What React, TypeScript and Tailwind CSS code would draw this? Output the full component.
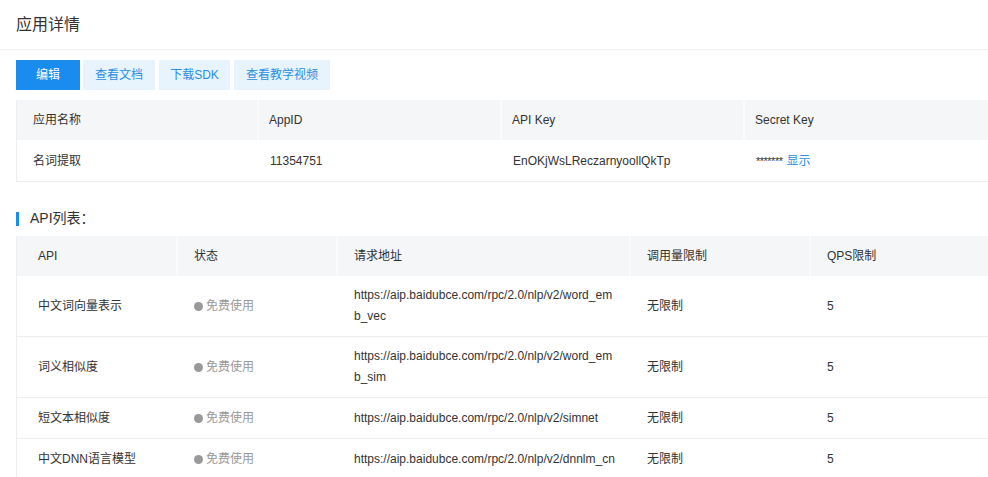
const apps = [{ name: '名词提取', appId: '11354751', apiKey: 'EnOKjWsLReczarnyoollQkTp' }];

const apis = [
  { name: '中文词向量表示', url: ['https://aip.baidubce.com/rpc/2.0/nlp/v2/word_em', 'b_vec'] },
  { name: '词义相似度', url: ['https://aip.baidubce.com/rpc/2.0/nlp/v2/word_em', 'b_sim'] },
  { name: '短文本相似度', url: ['https://aip.baidubce.com/rpc/2.0/nlp/v2/simnet'] },
  { name: '中文DNN语言模型', url: ['https://aip.baidubce.com/rpc/2.0/nlp/v2/dnnlm_cn'] },
];

const font = { fontFamily: '"Liberation Sans", Arial, "Noto Sans CJK SC", sans-serif' };

export default function App() {
  return (
    <div className="h-[477px] w-[988px] overflow-hidden bg-white text-[#333]" style={font}>
      <div className="flex h-[50px] items-center border-b border-[#eef0f3] px-4">
        <h1 className="text-[16px] font-normal text-[#333]">应用详情</h1>
      </div>

      <div className="pl-4">
        <div className="mt-[10px] flex gap-[3px]">
          <button className="h-[30px] w-[64px] bg-[#1a8cef] text-[12px] text-white">编辑</button>
          <button className="h-[30px] w-[72px] bg-[#e8f4fd] text-[12px] text-[#2a8ee6]">查看文档</button>
          <button className="ml-[1px] h-[30px] w-[71px] bg-[#e8f4fd] text-[12px] text-[#2a8ee6]">下载SDK</button>
          <button className="ml-[1px] h-[30px] w-[96px] bg-[#e8f4fd] text-[12px] text-[#2a8ee6]">查看教学视频</button>
        </div>

        <div className="mt-[10px] w-[990px] border-b border-l border-[#eceef1] text-[12px]">
          <div className="grid h-10 grid-cols-[242px_243px_243px_1fr] items-stretch bg-[#f5f6f8]">
            <div className="flex items-center border-r-2 border-[#fafbfc] pl-4">应用名称</div>
            <div className="flex items-center border-r-2 border-[#fafbfc] pl-[10px]">AppID</div>
            <div className="flex items-center border-r-2 border-[#fafbfc] pl-[10px]">API Key</div>
            <div className="flex items-center pl-[10px]">Secret Key</div>
          </div>
          {apps.map((a) => (
            <div key={a.appId} className="grid h-[41px] grid-cols-[242px_243px_243px_1fr] items-center">
              <div className="pl-4">{a.name}</div>
              <div className="pl-[11px]">{a.appId}</div>
              <div className="pl-[11px]">{a.apiKey}</div>
              <div className="pl-[11px]">
                <span className="text-[11px] tracking-[-0.5px]">*******</span>
                <a className="ml-[4px] text-[#2a8ee6]">显示</a>
              </div>
            </div>
          ))}
        </div>

        <div className="mt-[29px] flex h-[15px] items-center">
          <span className="h-[14px] w-[3px] bg-[#1a8cef]" />
          <span className="ml-[11px] text-[14px]">API列表：</span>
        </div>

        <div className="mt-[10px] w-[990px] border-l border-[#eceef1] text-[12px]">
          <div className="grid h-10 grid-cols-[161px_160px_293px_180px_1fr] items-stretch bg-[#f5f6f8]">
            <div className="flex items-center border-r-2 border-[#fafbfc] pl-[21px]">API</div>
            <div className="flex items-center border-r-2 border-[#fafbfc] pl-4">状态</div>
            <div className="flex items-center border-r-2 border-[#fafbfc] pl-4">请求地址</div>
            <div className="flex items-center border-r-2 border-[#fafbfc] pl-4">调用量限制</div>
            <div className="flex items-center pl-4">QPS限制</div>
          </div>
          {apis.map((r) => (
            <div
              key={r.name}
              className={`grid grid-cols-[161px_160px_293px_180px_1fr] items-center border-b border-[#eceef1] ${
                r.url.length > 1 ? 'h-[61px]' : 'h-[41px]'
              }`}
            >
              <div className="pl-[21px]">{r.name}</div>
              <div className="flex items-center pl-4 text-[#999]">
                <span className="mr-[3px] h-[9px] w-[9px] rounded-full bg-[#999]" />
                免费使用
              </div>
              <div className="pl-4 leading-[21px]">
                {r.url.map((u) => (
                  <div key={u}>{u}</div>
                ))}
              </div>
              <div className="pl-4">无限制</div>
              <div className="pl-4">5</div>
            </div>
          ))}
        </div>
      </div>
    </div>
  );
}
